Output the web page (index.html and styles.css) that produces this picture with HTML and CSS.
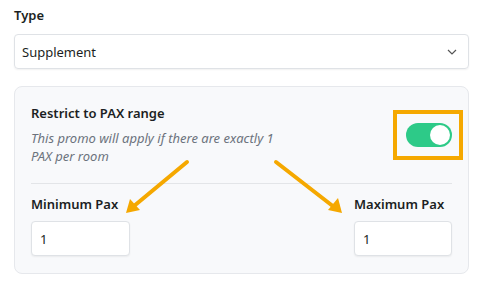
FILE: index.html
```html
<!DOCTYPE html>
<html lang="en">
<head>
    <meta charset="UTF-8">
    <title>Promo Type</title>
    <link rel="stylesheet" href="styles.css">
</head>
<body>
    <div class="page">
        <div class="form-group">
            <label class="field-label" for="type">Type</label>
            <div class="select-box" id="type">
                <span>Supplement</span>
                <svg class="chevron" width="10" height="6" viewBox="0 0 10 6">
                    <path d="M1 1 L5 5 L9 1" fill="none" stroke="#555" stroke-width="1.2"/>
                </svg>
            </div>
        </div>

        <div class="pax-panel">
            <div class="pax-header">
                <div class="pax-text">
                    <div class="pax-title">Restrict to PAX range</div>
                    <p class="pax-desc">This promo will apply if there are exactly 1 PAX per room</p>
                </div>
                <div class="toggle on"><span class="knob"></span></div>
            </div>

            <div class="divider"></div>

            <div class="pax-fields">
                <div class="pax-field">
                    <label class="field-label">Minimum Pax</label>
                    <div class="num-input">1</div>
                </div>
                <div class="pax-field">
                    <label class="field-label">Maximum Pax</label>
                    <div class="num-input">1</div>
                </div>
            </div>
        </div>

        <!-- annotation overlay -->
        <svg class="annotations" width="483" height="281" viewBox="0 0 483 281">
            <rect x="395" y="112" width="66" height="46" fill="none" stroke="#f5a800" stroke-width="4"/>
            <line x1="187" y1="162" x2="134" y2="206" stroke="#f5a800" stroke-width="4" stroke-linecap="round"/>
            <polygon points="126,213 130,199 140,210" fill="#f5a800"/>
            <line x1="276" y1="162" x2="334" y2="207" stroke="#f5a800" stroke-width="4" stroke-linecap="round"/>
            <polygon points="342,213 328,210 338,198" fill="#f5a800"/>
        </svg>
    </div>
</body>
</html>
```

FILE: styles.css
```css
:root {
    --text-color: #1c1f23;
    --muted-color: #6c737d;
    --border-color: #dfe2e6;
    --panel-bg: #f8f9fb;
    --green: #2dca88;
}

* {
    margin: 0;
    padding: 0;
    box-sizing: border-box;
}

body {
    font-family: "Noto Sans", "Open Sans", sans-serif;
    color: var(--text-color);
    background: white;
}

.page {
    position: relative;
    width: 483px;
    height: 281px;
    padding: 5px 14px 0 14px;
}

.field-label {
    display: block;
    font-size: 13px;
    font-weight: 600;
    line-height: 20px;
}

.select-box {
    margin-top: 9px;
    height: 35px;
    display: flex;
    align-items: center;
    justify-content: space-between;
    padding: 0 11px 0 7px;
    border: 1px solid var(--border-color);
    border-radius: 4px;
    box-shadow: 0 1px 2px rgba(0, 0, 0, 0.06);
    font-size: 13px;
}

.pax-panel {
    margin-top: 17px;
    height: 188px;
    background: var(--panel-bg);
    border: 1px solid #e6e8ec;
    border-radius: 8px;
    padding: 16px;
}

.pax-header {
    display: flex;
    justify-content: space-between;
    align-items: flex-start;
}

.pax-title {
    font-size: 13px;
    font-weight: 600;
    line-height: 20px;
}

.pax-desc {
    margin-top: 6px;
    max-width: 260px;
    font-size: 13px;
    font-style: italic;
    line-height: 18px;
    color: var(--muted-color);
}

.toggle {
    margin-top: 20px;
    width: 46px;
    height: 24px;
    border-radius: 12px;
    background: #ccc;
    padding: 2px;
    display: flex;
}

.toggle.on {
    background: var(--green);
    justify-content: flex-end;
}

.knob {
    width: 20px;
    height: 20px;
    border-radius: 50%;
    background: white;
}

.divider {
    margin-top: 18px;
    height: 1px;
    background: #e3e5e8;
}

.pax-fields {
    margin-top: 10px;
    display: flex;
    justify-content: space-between;
}

.num-input {
    margin-top: 7px;
    width: 99px;
    height: 35px;
    background: white;
    border: 1px solid var(--border-color);
    border-radius: 4px;
    box-shadow: 0 1px 2px rgba(0, 0, 0, 0.06);
    padding: 0 8px;
    display: flex;
    align-items: center;
    font-size: 13px;
}

.pax-field:last-child .num-input {
    width: 98px;
}

.annotations {
    position: absolute;
    top: 0;
    left: 0;
    pointer-events: none;
}
```
